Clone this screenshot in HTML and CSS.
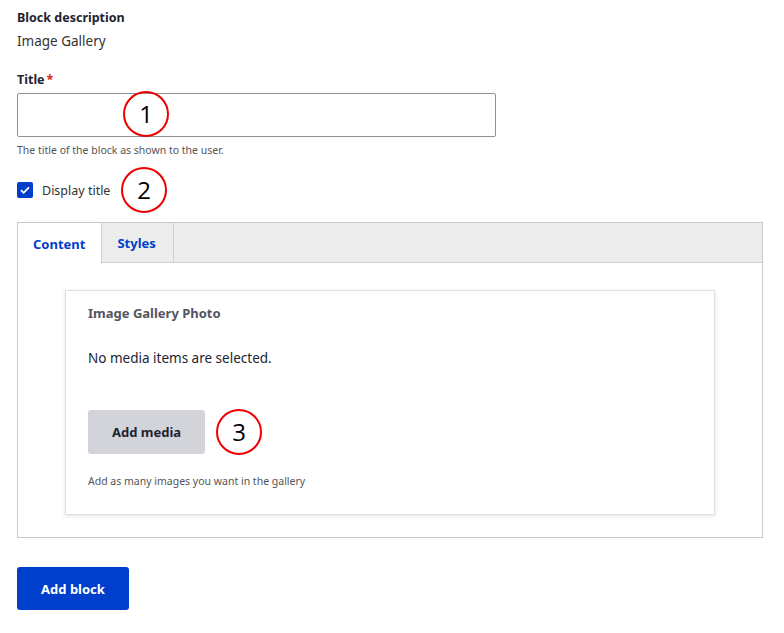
FILE: index.html
```html
<!DOCTYPE html>
<html>
<head>
<meta charset="utf-8">
<link rel="stylesheet" href="styles.css">
</head>
<body>
<div class="page">
  <div class="field">
    <div class="label">Block description</div>
    <div class="value">Image Gallery</div>
  </div>
  <div class="field title-field">
    <div class="label">Title<span class="req">*</span></div>
    <div class="input-wrap">
      <input class="text-input" type="text">
      <span class="marker m1">1</span>
    </div>
    <div class="help">The title of the block as shown to the user.</div>
  </div>
  <div class="check-row">
    <span class="checkbox"><svg width="16" height="16" viewBox="0 0 16 16"><path d="M4 8.2l2.6 2.6L12 5.4" fill="none" stroke="#fff" stroke-width="1.8"/></svg></span>
    <span class="check-label">Display title</span>
    <span class="marker m2">2</span>
  </div>
  <div class="tabs">
    <div class="tab-bar">
      <div class="tab active">Content</div>
      <div class="tab">Styles</div>
    </div>
    <div class="tab-body">
      <div class="card">
        <div class="card-title">Image Gallery Photo</div>
        <div class="card-text">No media items are selected.</div>
        <div class="btn-row">
          <button class="btn-secondary">Add media</button>
          <span class="marker m3">3</span>
        </div>
        <div class="card-help">Add as many images you want in the gallery</div>
      </div>
    </div>
  </div>
  <button class="btn-primary">Add block</button>
</div>
</body>
</html>
```
FILE: styles.css
```css
* { box-sizing: border-box; }
html, body { margin: 0; padding: 0; background: #fff; }
body { font-family: "Noto Sans", "Open Sans", sans-serif; color: #222330; }
.page { padding: 9px 17px 0 17px; }
.label { font-size: 12.5px; font-weight: 700; color: #222330; line-height: 18px; }
.value { font-size: 13.5px; color: #333; margin-top: 5px; line-height: 18px; }
.title-field { margin-top: 21px; }
.req { color: #d72222; margin-left: 2px; }
.input-wrap { position: relative; margin-top: 4px; width: 479px; }
.text-input { display: block; width: 479px; height: 44px; border: 1px solid #8e929c; border-radius: 2px; margin: 0; padding: 0 10px; font: inherit; }
.help { font-size: 10.5px; color: #555; margin-top: 6px; line-height: 15px; }
.marker { position: absolute; width: 46px; height: 46px; border: 2.5px solid #e00; border-radius: 50%; font-family: "Open Sans", "Noto Sans", sans-serif; font-size: 24px; color: #000; display: flex; align-items: center; justify-content: center; line-height: 1; background: transparent; }
.m1 { left: 106px; top: -2px; }
.check-row { position: relative; display: flex; align-items: center; margin-top: 23px; height: 18px; }
.checkbox { width: 16px; height: 16px; background: #003ecc; border-radius: 2px; display: inline-block; }
.checkbox svg { display: block; }
.check-label { margin-left: 9px; font-size: 12.5px; color: #333; }
.m2 { left: 104px; top: -14px; }
.tabs { margin-top: 23px; border: 1px solid #c9c9c9; width: 746px; }
.tab-bar { display: flex; background: #ececec; border-bottom: 1px solid #d0d0d0; height: 40px; }
.tab { font-size: 13px; font-weight: 700; color: #003ecc; padding: 0 17px 0 15px; display: flex; align-items: center; border-right: 1px solid #d0d0d0; height: 40px; }
.tab.active { background: #fff; height: 41px; margin-bottom: -1px; padding: 0 16px 0 15px; }
.tab-body { padding: 27px 47px 22px 47px; }
.card { border: 1px solid #e0e0e3; box-shadow: 0 1px 4px rgba(0,0,0,0.12); padding: 13px 22px 25px 22px; width: 650px; }
.card-title { font-size: 13px; font-weight: 700; color: #545560; line-height: 18px; }
.card-text { font-size: 13.5px; color: #222330; margin-top: 27px; line-height: 18px; }
.btn-row { position: relative; margin-top: 43px; height: 44px; }
.btn-secondary { height: 44px; width: 117px; background: #d3d4d9; border: none; border-radius: 3px; font-family: inherit; font-size: 13px; font-weight: 700; color: #222330; padding: 0; }
.m3 { left: 128px; top: -1px; }
.card-help { font-size: 10.5px; color: #555; margin-top: 20px; line-height: 15px; }
.btn-primary { margin-top: 29px; height: 43px; width: 112px; background: #003ecc; border: none; border-radius: 3px; color: #fff; font-family: inherit; font-size: 13px; font-weight: 700; padding: 0; }
```
